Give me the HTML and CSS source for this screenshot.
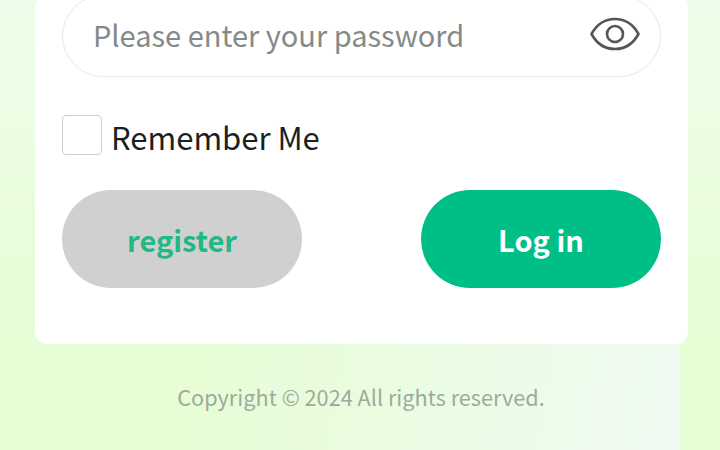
FILE: index.html
```html
<!DOCTYPE html>
<html lang="en">
<head>
    <meta charset="UTF-8">
    <meta name="viewport" content="width=device-width, initial-scale=1.0">
    <title>Log in</title>
    <link rel="stylesheet" href="styles.css">
</head>
<body>
    <div class="page">
        <div class="card">
            <div class="password-field">
                <input class="password-input" type="password" placeholder="Please enter your password">
                <svg class="eye-icon" viewBox="0 0 50 34" fill="none" stroke="#555" stroke-width="2.6" stroke-linejoin="round" aria-hidden="true">
                    <path d="M1.5 17C7 7 15 2 25 2s18 5 23.500 15C43 27 35 32 25 32S7 27 1.500 17Z"/>
                    <circle cx="25" cy="17" r="8"/>
                </svg>
            </div>
            <label class="remember">
                <input class="remember-box" type="checkbox">
                <span class="remember-text">Remember Me</span>
            </label>
            <div class="button-group">
                <button class="btn btn-register">register</button>
                <button class="btn btn-login">Log in</button>
            </div>
        </div>
        <p class="copyright">Copyright © 2024 All rights reserved.</p>
    </div>
</body>
</html>
```

FILE: styles.css
```css
html, body {
    height: 100%;
}

body {
    margin: 0;
    overflow: hidden;
    background: linear-gradient(#eefdea, #e6fdd6 75%);
    font-family: "Noto Sans CJK SC", "Noto Sans", sans-serif;
}

.page {
    display: flow-root;
    width: 680px;
    height: 450px;
    background: linear-gradient(100deg, rgba(239, 251, 240, 0) 35%, #effbf0 95%);
}

.card {
    width: 653px;
    height: 349px;
    box-sizing: border-box;
    margin-top: -5px;
    margin-left: 35px;
    padding: 0 27px;
    background: white;
    border-radius: 12px;
}

.password-field {
    display: flex;
    align-items: center;
    width: 599px;
    height: 82px;
    box-sizing: border-box;
    padding: 0 20px 0 30px;
    border: 1px solid #e8e8e8;
    border-radius: 41px;
}

.password-input {
    flex: 1;
    min-width: 0;
    height: 40px;
    margin-bottom: 4px;
    padding: 0;
    border: none;
    outline: none;
    background: none;
    font-family: inherit;
    font-size: 29px;
}

.password-input::placeholder {
    color: #858a88;
    opacity: 1;
}

.eye-icon {
    width: 50px;
    height: 34px;
    margin-bottom: 5px;
}

.remember {
    display: flex;
    align-items: flex-start;
    gap: 10px;
    height: 40px;
    margin-top: 38px;
    font-size: 31px;
    line-height: 40px;
    color: #1c1f22;
}

.remember-box {
    appearance: none;
    width: 40px;
    height: 40px;
    box-sizing: border-box;
    margin: 0;
    background: white;
    border: 1px solid #cfcfcf;
    border-radius: 4px;
}

.remember-text {
    padding-top: 2px;
    margin-left: -1px;
}

.button-group {
    display: flex;
    justify-content: space-between;
    margin-top: 35px;
}

.btn {
    width: 240px;
    height: 98px;
    padding: 0;
    border: none;
    border-radius: 49px;
    font-family: inherit;
    font-size: 29px;
    font-weight: 700;
}

.btn-register {
    background-color: #d0d0d0;
    color: #22b885;
}

.btn-login {
    background-color: #00bf86;
    color: white;
}

.copyright {
    width: 720px;
    box-sizing: border-box;
    margin: 36px 0 0;
    padding-left: 2px;
    text-align: center;
    font-size: 21.7px;
    line-height: 34px;
    color: #9dab9c;
}
```
